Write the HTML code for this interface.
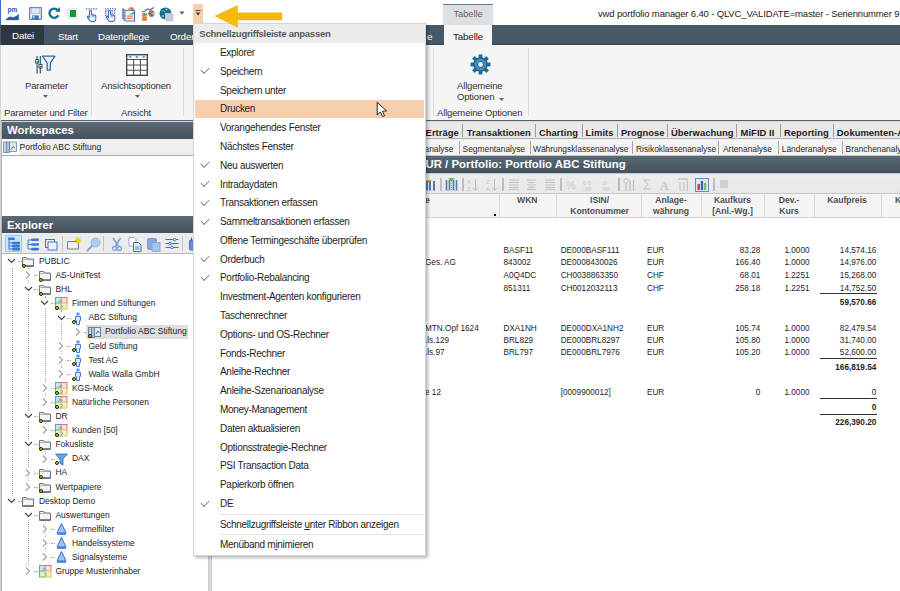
<!DOCTYPE html>
<html><head><meta charset="utf-8"><style>
*{margin:0;padding:0;box-sizing:border-box}
html,body{width:900px;height:591px;overflow:hidden;background:#fff;font-family:"Liberation Sans",sans-serif;color:#222}
.a{position:absolute}
.t{position:absolute;white-space:nowrap;line-height:1}
.hdr{background:linear-gradient(#5a6976,#45525d);color:#fff;font-weight:bold}
.mi{position:absolute;left:26px;font-size:10px;letter-spacing:-0.3px;color:#1e1e1e;white-space:nowrap;line-height:1}
.ck{position:absolute;left:8px;width:8px;height:4.5px;border-left:1.2px solid #808080;border-bottom:1.2px solid #808080;transform:rotate(-45deg)}
.rb{font-size:9.5px;color:#333;letter-spacing:-0.15px}
.tr{font-size:8.6px;color:#1c1c30}
.tb{font-weight:bold;font-size:9.3px;color:#1a1a1a}
.sb{font-size:8.4px;color:#333}
.d{font-size:8.2px;color:#222}
.db{font-size:8.2px;color:#222;font-weight:bold}
.hd{font-size:8.4px;color:#555;font-weight:bold;text-align:center}
</style></head><body>
<div class="a" style="left:0px;top:0px;width:900px;height:25px;background:#fff"></div>
<div class="a" style="left:0px;top:0px;width:1px;height:25px;background:#3c6cc0"></div>
<div class="a" style="left:443px;top:4px;width:50px;height:21px;background:#dde0e3;border-top:1px solid #737b83"></div>
<div class="t rb" style="left:453.5px;top:9px;color:#666">Tabelle</div>
<div class="t rb" style="left:598px;top:9px;color:#222">vwd portfolio manager 6.40 - QLVC_VALIDATE=master - Seriennummer 9</div>
<svg class="a" style="left:5px;top:7px;" width="15" height="14" viewBox="0 0 15 14"><text x="2.5" y="5.3" font-family="Liberation Sans" font-weight="bold" font-size="6.5" fill="#2d5ea8">pm</text><path d="M1 12.5 Q4 8.5 7 10 Q10 11 13.8 6.8 V12.5 Z" fill="#2d5ea8"/><path d="M0.8 12.6h13" stroke="#2d5ea8" stroke-width="1.2"/></svg>
<svg class="a" style="left:29px;top:7px;" width="13" height="13" viewBox="0 0 13 13"><rect x="0.6" y="0.6" width="11.8" height="11.8" rx="0.8" fill="#f0f4fb" stroke="#4a7fd0" stroke-width="1.2"/><rect x="2.5" y="1" width="8" height="5.5" fill="#e2e8f2" stroke="#8aa8d8" stroke-width="0.6"/><rect x="3.2" y="8.4" width="6.6" height="3.6" fill="#3a6cc0"/><rect x="4" y="9.2" width="1.5" height="2" fill="#dfe8f6"/></svg>
<svg class="a" style="left:48px;top:7px;" width="13" height="12" viewBox="0 0 13 12"><path d="M9.6 3.2 A4.6 4.6 0 1 0 10.3 8.2" fill="none" stroke="#1a6e96" stroke-width="2.4"/><path d="M7.2 4.6 L12.2 5 L11.8 0 Z" fill="#1a6e96"/></svg>
<div class="a" style="left:67px;top:8px;width:11px;height:11px;background:#eceef2"></div>
<div class="a" style="left:70px;top:10px;width:6px;height:6.5px;background:#0a9a30"></div>
<svg class="a" style="left:85px;top:6px;" width="14" height="16" viewBox="0 0 14 16"><path d="M1 2.8h11" stroke="#3c6fc8" stroke-width="1.3" stroke-dasharray="1.3 1.1"/><path d="M4.5 12.2 V5.2 a1 1 0 0 1 2 0 V8.5 l3.2 0.6 a1.3 1.3 0 0 1 1.1 1.3 V13 a2.5 2.5 0 0 1 -2.5 2.5 H6.5 a2.5 2.5 0 0 1 -2.2 -1.4 L2.5 11.5 a0.9 0.9 0 0 1 1.5 -1 Z" fill="#fff" stroke="#3c6fc8" stroke-width="1.1"/><path d="M7.2 9 V11.5 M8.9 9.3 V11.5" stroke="#3c6fc8" stroke-width="0.7"/></svg>
<svg class="a" style="left:104px;top:6px;" width="14" height="16" viewBox="0 0 14 16"><path d="M1 2.8h11 M1 5h3 M1 7.2h2 M1 9.4h1.5 M7.5 5h4.5 M7.5 7.2h4.5" stroke="#3c6fc8" stroke-width="1.3" stroke-dasharray="1.3 1.1"/><path d="M4.5 12.2 V5.2 a1 1 0 0 1 2 0 V8.5 l3.2 0.6 a1.3 1.3 0 0 1 1.1 1.3 V13 a2.5 2.5 0 0 1 -2.5 2.5 H6.5 a2.5 2.5 0 0 1 -2.2 -1.4 L2.5 11.5 a0.9 0.9 0 0 1 1.5 -1 Z" fill="#fff" stroke="#3c6fc8" stroke-width="1.1"/><path d="M7.2 9 V11.5 M8.9 9.3 V11.5" stroke="#3c6fc8" stroke-width="0.7"/></svg>
<svg class="a" style="left:122px;top:6px;" width="14" height="16" viewBox="0 0 14 16"><path d="M0.8 2.5 L3.5 4.5 V15 L0.8 13 Z" fill="#9a9a9a" stroke="#3c6fc8" stroke-width="0.9"/><path d="M3.5 4.5 H12.5 V15 H3.5" fill="#fff" stroke="#3c6fc8" stroke-width="1.1"/><path d="M8.5 1 A3.5 3.5 0 0 1 12 4.5 H8.5Z" fill="#f05a1e"/><path d="M8 1.5 A3.5 3.5 0 0 0 5.5 6 L8 4.5 Z" fill="#a8a8a8"/><path d="M6 8.5 L12 5.5 V8.5Z" fill="#3cc878"/><path d="M4.5 10.2h6.5 M4.5 12.3h6.5" stroke="#f07a40" stroke-width="1.2"/></svg>
<svg class="a" style="left:141px;top:6px;" width="15" height="16" viewBox="0 0 15 16"><path d="M1 6 L4 5 L6.5 3 L9 3.8 L13 1.5" fill="none" stroke="#3c6fc8" stroke-width="1.2"/><rect x="1" y="7" width="5" height="8" fill="#f4a070"/><path d="M1.5 9h4 M1.5 11.5h4 M1.5 13.5h4" stroke="#f05a1e" stroke-width="1"/><path d="M2 7.5 L3.5 9 L5.5 7.5Z" fill="#2aa050"/><circle cx="10.5" cy="7.5" r="3.2" fill="#b0b0b0"/><path d="M10.5 7.5 L8 5.5 A3.2 3.2 0 0 1 13 5.5Z" fill="#f05a1e"/><path d="M10.5 7.5 L8 9.5 A3.2 3.2 0 0 0 13 9.5Z" fill="#2aa050"/><path d="M10.5 7.5 L7.5 6 V9Z" fill="#5a5ad0"/></svg>
<svg class="a" style="left:159px;top:6px;" width="15" height="16" viewBox="0 0 15 16"><circle cx="6.5" cy="7.5" r="6" fill="#1f6e90"/><circle cx="4" cy="10" r="0.8" fill="#fff"/><circle cx="7.5" cy="3.5" r="0.8" fill="#fff"/><path d="M3 5 Q5 4 6 6" stroke="#9cc8dc" stroke-width="0.6" fill="none"/><rect x="6.5" y="7.5" width="8" height="8" fill="#a8c0cc" stroke="#ffffff" stroke-width="0.5"/><rect x="7.5" y="8.5" width="6" height="6" fill="#c0d2da"/></svg>
<svg class="a" style="left:179px;top:11px;" width="6" height="4" viewBox="0 0 6 4"><path d="M0.5 0.5h5l-2.5 3z" fill="#555"/></svg>
<div class="a" style="left:193px;top:4px;width:10px;height:19px;background:#f5cfae"></div>
<svg class="a" style="left:195px;top:10px;" width="6" height="7" viewBox="0 0 6 7"><path d="M0.5 0.5h5" stroke="#444" stroke-width="1"/><path d="M0.5 2.5h5l-2.5 3z" fill="#444"/></svg>
<svg class="a" style="left:212px;top:4px;z-index:5" width="72" height="25" viewBox="0 0 72 25"><path d="M2.4 12.1 L25.8 0.9 L25.8 8.4 L70.2 8.4 L70.2 16.2 L25.8 16.2 L25.8 23.8 Z" fill="#f7b80c"/></svg>
<div class="a" style="left:0px;top:25px;width:900px;height:20px;background:#475866;border-bottom:1px solid #3a4852"></div>
<div class="a" style="left:1px;top:25px;width:43px;height:20px;background:#2d3942"></div>
<div class="t rb" style="left:12px;top:30.5px;color:#fff;font-size:9.8px">Datei</div>
<div class="t rb" style="left:58px;top:31.5px;color:#fff;font-size:9.8px">Start</div>
<div class="t rb" style="left:98px;top:31.5px;color:#fff;font-size:9.8px">Datenpflege</div>
<div class="t rb" style="left:170px;top:31.5px;color:#fff;font-size:9.8px">Order</div>
<div class="t rb" style="left:427px;top:31.5px;color:#fff;font-size:9.8px">e</div>
<div class="a" style="left:444px;top:25px;width:48px;height:20px;background:#f5f5f5"></div>
<div class="t rb" style="left:453px;top:31.5px;color:#222;font-size:9.8px">Tabelle</div>
<div class="a" style="left:0px;top:45px;width:900px;height:75px;background:#f5f5f5"></div>
<div class="a" style="left:0px;top:45px;width:1px;height:546px;background:#d4d4d4"></div>
<div class="a" style="left:1px;top:122px;width:1px;height:469px;background:#b0b0b0"></div>
<div class="a" style="left:91px;top:48px;width:1px;height:68px;background:#dcdcdc"></div>
<div class="a" style="left:183px;top:48px;width:1px;height:68px;background:#dcdcdc"></div>
<div class="a" style="left:433px;top:48px;width:1px;height:68px;background:#dcdcdc"></div>
<div class="a" style="left:528px;top:48px;width:1px;height:68px;background:#dcdcdc"></div>
<div class="t rb" style="left:25px;top:81px;">Parameter</div>
<div class="t rb" style="left:4px;top:108px;">Parameter und Filter</div>
<div class="t rb" style="left:101px;top:81px;">Ansichtsoptionen</div>
<div class="t rb" style="left:121px;top:108px;">Ansicht</div>
<div class="t rb" style="left:457px;top:81px;">Allgemeine</div>
<div class="t rb" style="left:457px;top:92px;">Optionen</div>
<div class="t rb" style="left:437px;top:108px;">Allgemeine Optionen</div>
<div class="a" style="left:0px;top:120px;width:900px;height:1px;background:#5a646d"></div>
<div class="a" style="left:0px;top:121px;width:900px;height:1px;background:#d4d8db"></div>
<div class="a" style="left:0px;top:122px;width:208px;height:469px;background:#fff"></div>
<div class="a" style="left:0px;top:45px;width:1px;height:546px;background:#d4d4d4"></div>
<div class="a" style="left:1px;top:122px;width:1px;height:469px;background:#b0b0b0"></div>
<div class="a hdr" style="left:2px;top:122px;width:206px;height:17px"></div>
<div class="t " style="left:7px;top:124.94px;font-size:11.4px;font-weight:bold;color:#fff">Workspaces</div>
<div class="a hdr" style="left:2px;top:216px;width:206px;height:17px"></div>
<div class="t " style="left:7px;top:219.84px;font-size:11.4px;font-weight:bold;color:#fff">Explorer</div>
<div class="a" style="left:2px;top:233px;width:206px;height:21px;background:#ececec;border-bottom:1px solid #b8b8b8"></div>
<div class="a" style="left:5px;top:235px;width:17px;height:17px;background:#cce4f7;border:1px solid #99c9ef"></div>
<div class="a" style="left:208px;top:122px;width:4px;height:469px;background:#d0d1d3"></div>
<div class="a" style="left:210px;top:122px;width:1px;height:469px;background:#dcdddf"></div>
<div class="a" style="left:211px;top:122px;width:1px;height:469px;background:#c7c8ca"></div>
<svg class="a" style="left:35px;top:55px;" width="21" height="19" viewBox="0 0 21 19"><path d="M2.1 1v17.6 M5.4 1v17.6" stroke="#2e6e96" stroke-width="1.3"/><rect x="0.7" y="4.6" width="3" height="3.4" fill="#fff" stroke="#2a3a40" stroke-width="0.9"/><circle cx="2.6" cy="6.6" r="0.9" fill="#2aa040"/><rect x="4" y="9.6" width="3" height="3.4" fill="#fff" stroke="#2a3a40" stroke-width="0.9"/><circle cx="5.6" cy="11.6" r="0.9" fill="#e03030"/><path d="M7.5 1.2 H20 L15.3 8 V15.2 H12.2 V8 Z" fill="#e6eef4" stroke="#2e6e96" stroke-width="1.3" stroke-linejoin="round"/></svg>
<svg class="a" style="left:43px;top:95px;" width="5" height="3" viewBox="0 0 5 3"><path d="M0 0h5l-2.5 3z" fill="#666"/></svg>
<svg class="a" style="left:126px;top:54px;" width="22" height="22" viewBox="0 0 22 22"><rect x="0.7" y="0.7" width="20.6" height="20.6" fill="#fff" stroke="#474747" stroke-width="1.4"/><path d="M0.7 5.5h20.6 M0.7 11h20.6 M0.7 16.3h20.6 M7.6 5.5v15.8 M14.4 5.5v15.8" stroke="#555" stroke-width="1.1"/><path d="M2.5 2.2h3.5l-1.75 2z M9.2 2.2h3.5l-1.75 2z M16 2.2h3.5l-1.75 2z" fill="#2a8ad8"/></svg>
<svg class="a" style="left:135px;top:95px;" width="5" height="3" viewBox="0 0 5 3"><path d="M0 0h5l-2.5 3z" fill="#666"/></svg>
<svg class="a" style="left:470px;top:54px;" width="21" height="21" viewBox="0 0 21 21"><g transform="translate(10.5 10.5)"><rect x="-1.9" y="-10" width="3.8" height="4" transform="rotate(0)" fill="#1b6a98"/><rect x="-1.9" y="-10" width="3.8" height="4" transform="rotate(45)" fill="#1b6a98"/><rect x="-1.9" y="-10" width="3.8" height="4" transform="rotate(90)" fill="#1b6a98"/><rect x="-1.9" y="-10" width="3.8" height="4" transform="rotate(135)" fill="#1b6a98"/><rect x="-1.9" y="-10" width="3.8" height="4" transform="rotate(180)" fill="#1b6a98"/><rect x="-1.9" y="-10" width="3.8" height="4" transform="rotate(225)" fill="#1b6a98"/><rect x="-1.9" y="-10" width="3.8" height="4" transform="rotate(270)" fill="#1b6a98"/><rect x="-1.9" y="-10" width="3.8" height="4" transform="rotate(315)" fill="#1b6a98"/><circle r="7.3" fill="#1b6a98"/><circle r="5.2" fill="none" stroke="#8cb8d4" stroke-width="0.6"/><circle r="3.9" fill="none" stroke="#8cb8d4" stroke-width="0.6"/><circle r="2.4" fill="#f5f5f5"/></g></svg>
<svg class="a" style="left:499px;top:98px;" width="5" height="3" viewBox="0 0 5 3"><path d="M0 0h5l-2.5 3z" fill="#666"/></svg>
<div class="a" style="left:19px;top:139px;width:189px;height:17px;background:#efefef;border-bottom:1px solid #a8a8a8"></div>
<div class="a" style="left:2px;top:139px;width:17px;height:17px;background:#fff;border-bottom:1px solid #a8a8a8"></div>
<svg class="a" style="left:3px;top:141px;" width="14" height="12" viewBox="0 0 14 12"><rect x="0.5" y="1" width="3" height="10.5" fill="#c4d2e4" stroke="#6b86aa" stroke-width="0.8"/><rect x="3.5" y="1" width="3" height="10.5" fill="#aebfd6" stroke="#6b86aa" stroke-width="0.8"/><rect x="6.5" y="1" width="7" height="9.5" fill="#dfe6ef" stroke="#6b86aa" stroke-width="0.8"/><path d="M8 8.5 L10 5.5 L12 7" stroke="#4c6c9c" stroke-width="0.9" fill="none"/></svg>
<div class="t " style="left:19.5px;top:143.20px;font-size:8.5px;color:#1c1c2c">Portfolio ABC Stiftung</div>
<svg class="a" style="left:7px;top:237px;" width="14" height="14" viewBox="0 0 14 14"><rect x="1" y="0.5" width="7" height="2.6" rx="1" fill="#3a78d8"/><path d="M2 3v9.5 M2 6h3 M2 9h3 M2 12h3" stroke="#3a78d8" stroke-width="1"/><rect x="5" y="4.8" width="8" height="2.6" rx="1" fill="#3a78d8"/><rect x="5" y="7.8" width="8" height="2.6" rx="1" fill="#3a78d8"/><rect x="5" y="10.8" width="8" height="2.6" rx="1" fill="#3a78d8"/></svg>
<svg class="a" style="left:26px;top:237px;" width="14" height="14" viewBox="0 0 14 14"><path d="M2 3v9 M2 3h3 M2 7.5h3 M2 12h3" stroke="#3a78d8" stroke-width="1"/><rect x="5" y="1.5" width="8" height="2.6" rx="1" fill="#3a78d8"/><rect x="5" y="6.2" width="8" height="2.6" rx="1" fill="#3a78d8"/><rect x="5" y="10.8" width="8" height="2.6" rx="1" fill="#3a78d8"/></svg>
<svg class="a" style="left:45px;top:239px;" width="13" height="12" viewBox="0 0 13 12"><rect x="0.5" y="0.5" width="9" height="8" fill="none" stroke="#3a78d8"/><rect x="3" y="3" width="9" height="8" fill="#eef2f8" stroke="#3a78d8"/></svg>
<div class="a" style="left:62px;top:236px;width:1px;height:15px;background:#c4c4c4"></div>
<svg class="a" style="left:67px;top:236px;" width="15" height="14" viewBox="0 0 15 14"><path d="M0.5 5.5h11v7.5h-11z" fill="#f0f2f6" stroke="#6a7488" stroke-width="0.9"/><path d="M11 1v7 M7.5 4.5h7 M8.5 2l5 5 M13.5 2l-5 5" stroke="#e8d800" stroke-width="1.2"/></svg>
<svg class="a" style="left:86px;top:237px;" width="15" height="15" viewBox="0 0 15 15"><circle cx="9.5" cy="5.5" r="4.5" fill="#a9cdf2" stroke="#8ab4e6" stroke-width="0.8"/><path d="M6.3 8.8 L1 14" stroke="#8aa0c0" stroke-width="2"/></svg>
<div class="a" style="left:103px;top:236px;width:1px;height:15px;background:#c4c4c4"></div>
<svg class="a" style="left:111px;top:237px;" width="12" height="15" viewBox="0 0 12 15"><path d="M2 1 L7.5 9 M9.5 1 L4.5 9" stroke="#7aa4dc" stroke-width="1.6"/><circle cx="3.5" cy="11.5" r="2" fill="none" stroke="#7aa4dc" stroke-width="1.3"/><circle cx="8.5" cy="11.5" r="2" fill="none" stroke="#7aa4dc" stroke-width="1.3"/></svg>
<svg class="a" style="left:128px;top:237px;" width="14" height="15" viewBox="0 0 14 15"><path d="M1 0.5h5l2 2v6.5h-7z" fill="#fff" stroke="#8a9ab4" stroke-width="0.8"/><path d="M5.5 5.5h5l2.5 2.5v6.5h-7.5z" fill="#e8f0fb" stroke="#3a6cc0" stroke-width="1"/><path d="M7 10h4.5 M7 12h4.5" stroke="#3a6cc0" stroke-width="0.8"/></svg>
<svg class="a" style="left:147px;top:237px;" width="14" height="15" viewBox="0 0 14 15"><rect x="0.5" y="1.5" width="9" height="11" rx="1.5" fill="#8aa8d8" stroke="#7090c8" stroke-width="0.8"/><rect x="5" y="5.5" width="8" height="9" fill="#a8c4ee" stroke="#7aa0dc" stroke-width="0.8"/></svg>
<svg class="a" style="left:165px;top:238px;" width="14" height="11" viewBox="0 0 14 11"><path d="M0.5 1.5h13 M0.5 5.5h13 M0.5 9.5h13" stroke="#3a6cc8" stroke-width="1"/><circle cx="9.5" cy="1.5" r="1.3" fill="#fff" stroke="#3a6cc8"/><circle cx="5" cy="5.5" r="1.3" fill="#fff" stroke="#3a6cc8"/><circle cx="7" cy="9.5" r="1.3" fill="#fff" stroke="#3a6cc8"/></svg>
<div class="a" style="left:182px;top:236px;width:1px;height:15px;background:#c4c4c4"></div>
<svg class="a" style="left:189px;top:237px;" width="5" height="14" viewBox="0 0 5 14"><rect x="0.5" y="3" width="4" height="10" rx="1" fill="#6a8ed8" stroke="#3a5ca8" stroke-width="0.8"/><path d="M2.5 3V0.5" stroke="#3a5ca8"/></svg>
<div class="a" style="left:17.5px;top:261.1px;width:4px;height:0;border-top:1px dotted #a8a8a8"></div>
<div class="a" style="left:28.2px;top:268.1px;width:0;height:216.6px;border-left:1px dotted #a8a8a8"></div>
<div class="a" style="left:34.0px;top:275.2px;width:4px;height:0;border-top:1px dotted #a8a8a8"></div>
<div class="a" style="left:34.0px;top:289.3px;width:4px;height:0;border-top:1px dotted #a8a8a8"></div>
<div class="a" style="left:44.7px;top:296.3px;width:0;height:103.8px;border-left:1px dotted #a8a8a8"></div>
<div class="a" style="left:50.5px;top:303.4px;width:4px;height:0;border-top:1px dotted #a8a8a8"></div>
<div class="a" style="left:61.2px;top:310.4px;width:0;height:61.5px;border-left:1px dotted #a8a8a8"></div>
<div class="a" style="left:67.0px;top:317.5px;width:4px;height:0;border-top:1px dotted #a8a8a8"></div>
<div class="a" style="left:77.7px;top:324.5px;width:0;height:5.1px;border-left:1px dotted #a8a8a8"></div>
<div class="a" style="left:83.5px;top:331.6px;width:4px;height:0;border-top:1px dotted #a8a8a8"></div>
<div class="a" style="left:67.0px;top:345.7px;width:4px;height:0;border-top:1px dotted #a8a8a8"></div>
<div class="a" style="left:67.0px;top:359.8px;width:4px;height:0;border-top:1px dotted #a8a8a8"></div>
<div class="a" style="left:67.0px;top:373.9px;width:4px;height:0;border-top:1px dotted #a8a8a8"></div>
<div class="a" style="left:50.5px;top:388.0px;width:4px;height:0;border-top:1px dotted #a8a8a8"></div>
<div class="a" style="left:50.5px;top:402.1px;width:4px;height:0;border-top:1px dotted #a8a8a8"></div>
<div class="a" style="left:34.0px;top:416.2px;width:4px;height:0;border-top:1px dotted #a8a8a8"></div>
<div class="a" style="left:44.7px;top:423.2px;width:0;height:5.1px;border-left:1px dotted #a8a8a8"></div>
<div class="a" style="left:50.5px;top:430.3px;width:4px;height:0;border-top:1px dotted #a8a8a8"></div>
<div class="a" style="left:34.0px;top:444.4px;width:4px;height:0;border-top:1px dotted #a8a8a8"></div>
<div class="a" style="left:44.7px;top:451.4px;width:0;height:5.1px;border-left:1px dotted #a8a8a8"></div>
<div class="a" style="left:50.5px;top:458.5px;width:4px;height:0;border-top:1px dotted #a8a8a8"></div>
<div class="a" style="left:34.0px;top:472.6px;width:4px;height:0;border-top:1px dotted #a8a8a8"></div>
<div class="a" style="left:34.0px;top:486.7px;width:4px;height:0;border-top:1px dotted #a8a8a8"></div>
<div class="a" style="left:17.5px;top:500.8px;width:4px;height:0;border-top:1px dotted #a8a8a8"></div>
<div class="a" style="left:28.2px;top:507.8px;width:0;height:61.5px;border-left:1px dotted #a8a8a8"></div>
<div class="a" style="left:34.0px;top:514.9px;width:4px;height:0;border-top:1px dotted #a8a8a8"></div>
<div class="a" style="left:44.7px;top:521.9px;width:0;height:33.3px;border-left:1px dotted #a8a8a8"></div>
<div class="a" style="left:50.5px;top:529.0px;width:4px;height:0;border-top:1px dotted #a8a8a8"></div>
<div class="a" style="left:50.5px;top:543.1px;width:4px;height:0;border-top:1px dotted #a8a8a8"></div>
<div class="a" style="left:50.5px;top:557.2px;width:4px;height:0;border-top:1px dotted #a8a8a8"></div>
<div class="a" style="left:34.0px;top:571.3px;width:4px;height:0;border-top:1px dotted #a8a8a8"></div>
<div class="a" style="left:11.7px;top:268.1px;width:0;height:227.7px;border-left:1px dotted #a8a8a8"></div>
<div class="a" style="left:86px;top:324.6px;width:102px;height:14px;background:#dedede"></div>
<svg class="a" style="left:7.1px;top:256.1px" width="9" height="10" viewBox="0 0 9 10"><rect width="9" height="10" fill="#fff"/><path d="M1 3l3.5 3.5 3.5-3.5" fill="none" stroke="#454545" stroke-width="1.2"/></svg>
<svg class="a" style="left:22.1px;top:255.1px" width="13" height="13" viewBox="0 0 13 13"><path d="M0.5 2.5h4l1 1.5h6v7.5h-11z" fill="#f4f4f6" stroke="#6c7380" stroke-width="1"/><path d="M0.5 4.5h11" stroke="#9aa0aa" stroke-width="0.8"/><path d="M1 10.6h10.5" stroke="#7c8390" stroke-width="1.2"/></svg>
<div class="a" style="left:22.4px;top:263.7px;width:4px;height:4px;border-radius:50%;background:#e0d020;border:1px solid #202000"></div>
<div class="t" style="left:38.9px;top:256.9px;font-size:8.5px;color:#1c1c2c">PUBLIC</div>
<svg class="a" style="left:24.1px;top:270.2px" width="8" height="10" viewBox="0 0 8 10"><rect width="8" height="10" fill="#fff"/><path d="M2 1.5l3.5 3.5-3.5 3.5" fill="none" stroke="#a0a0a0" stroke-width="1.1"/></svg>
<svg class="a" style="left:38.6px;top:269.2px" width="13" height="13" viewBox="0 0 13 13"><path d="M0.5 2.5h4l1 1.5h6v7.5h-11z" fill="#f4f4f6" stroke="#6c7380" stroke-width="1"/><path d="M0.5 4.5h11" stroke="#9aa0aa" stroke-width="0.8"/><path d="M1 10.6h10.5" stroke="#7c8390" stroke-width="1.2"/></svg>
<div class="a" style="left:38.9px;top:277.8px;width:4px;height:4px;border-radius:50%;background:#e0d020;border:1px solid #202000"></div>
<div class="t" style="left:55.4px;top:271.0px;font-size:8.5px;color:#1c1c2c">AS-UnitTest</div>
<svg class="a" style="left:23.6px;top:284.3px" width="9" height="10" viewBox="0 0 9 10"><rect width="9" height="10" fill="#fff"/><path d="M1 3l3.5 3.5 3.5-3.5" fill="none" stroke="#454545" stroke-width="1.2"/></svg>
<svg class="a" style="left:38.6px;top:283.3px" width="13" height="13" viewBox="0 0 13 13"><path d="M0.5 2.5h4l1 1.5h6v7.5h-11z" fill="#f4f4f6" stroke="#6c7380" stroke-width="1"/><path d="M0.5 4.5h11" stroke="#9aa0aa" stroke-width="0.8"/><path d="M1 10.6h10.5" stroke="#7c8390" stroke-width="1.2"/></svg>
<div class="a" style="left:38.9px;top:291.9px;width:4px;height:4px;border-radius:50%;background:#e0d020;border:1px solid #202000"></div>
<div class="t" style="left:55.4px;top:285.1px;font-size:8.5px;color:#1c1c2c">BHL</div>
<svg class="a" style="left:40.1px;top:298.4px" width="9" height="10" viewBox="0 0 9 10"><rect width="9" height="10" fill="#fff"/><path d="M1 3l3.5 3.5 3.5-3.5" fill="none" stroke="#454545" stroke-width="1.2"/></svg>
<svg class="a" style="left:55.1px;top:297.4px" width="13" height="13" viewBox="0 0 13 13"><rect x="0.5" y="0.5" width="6" height="6" fill="#cfe2f8" stroke="#5a94dc" stroke-width="0.9"/><rect x="6" y="0.5" width="6" height="6" fill="#fbe0e0" stroke="#dc6a6a" stroke-width="0.9"/><rect x="0.5" y="6" width="6" height="6" fill="#dcf2cc" stroke="#5ab84a" stroke-width="0.9"/><rect x="6" y="6" width="6" height="6" fill="#faf0c0" stroke="#d8c050" stroke-width="0.9"/><path d="M4 5 a1.5 1.5 0 0 1 3 0 M6 8 a1.5 1.5 0 0 1 0 3" stroke="#5a94dc" fill="none" stroke-width="0.8"/></svg>
<div class="a" style="left:55.4px;top:306.0px;width:4px;height:4px;border-radius:50%;background:#e0d020;border:1px solid #202000"></div>
<div class="t" style="left:71.9px;top:299.2px;font-size:8.5px;color:#1c1c2c">Firmen und Stiftungen</div>
<svg class="a" style="left:56.6px;top:312.5px" width="9" height="10" viewBox="0 0 9 10"><rect width="9" height="10" fill="#fff"/><path d="M1 3l3.5 3.5 3.5-3.5" fill="none" stroke="#454545" stroke-width="1.2"/></svg>
<svg class="a" style="left:71.6px;top:311.5px" width="13" height="13" viewBox="0 0 13 13"><circle cx="6" cy="2" r="1.8" fill="#5b9be8"/><path d="M3.5 4.5h5v4h-1v4h-3v-4h-1z" fill="#dbe9fb" stroke="#3c7fe0" stroke-width="1"/></svg>
<div class="a" style="left:71.9px;top:320.1px;width:4px;height:4px;border-radius:50%;background:#e0d020;border:1px solid #202000"></div>
<div class="t" style="left:88.4px;top:313.3px;font-size:8.5px;color:#1c1c2c">ABC Stiftung</div>
<svg class="a" style="left:73.6px;top:326.6px" width="8" height="10" viewBox="0 0 8 10"><rect width="8" height="10" fill="#fff"/><path d="M2 1.5l3.5 3.5-3.5 3.5" fill="none" stroke="#a0a0a0" stroke-width="1.1"/></svg>
<svg class="a" style="left:88.1px;top:325.6px" width="13" height="13" viewBox="0 0 13 13"><rect x="0.5" y="1.5" width="3" height="10" fill="#c8d4e4" stroke="#6b7f9c"/><rect x="3.5" y="1.5" width="3" height="10" fill="#b4c4d8" stroke="#6b7f9c"/><rect x="6.5" y="1.5" width="6" height="9" fill="#e4eaf2" stroke="#6b7f9c"/><path d="M8 8l2-3 1.5 2" stroke="#4a6a9c" fill="none"/></svg>
<div class="a" style="left:88.4px;top:334.2px;width:4px;height:4px;border-radius:50%;background:#e0d020;border:1px solid #202000"></div>
<div class="t" style="left:104.9px;top:327.4px;font-size:8.5px;color:#1c1c2c">Portfolio ABC Stiftung</div>
<svg class="a" style="left:57.1px;top:340.7px" width="8" height="10" viewBox="0 0 8 10"><rect width="8" height="10" fill="#fff"/><path d="M2 1.5l3.5 3.5-3.5 3.5" fill="none" stroke="#a0a0a0" stroke-width="1.1"/></svg>
<svg class="a" style="left:71.6px;top:339.7px" width="13" height="13" viewBox="0 0 13 13"><circle cx="6" cy="2" r="1.8" fill="#5b9be8"/><path d="M3.5 4.5h5v4h-1v4h-3v-4h-1z" fill="#dbe9fb" stroke="#3c7fe0" stroke-width="1"/></svg>
<div class="a" style="left:71.9px;top:348.3px;width:4px;height:4px;border-radius:50%;background:#e0d020;border:1px solid #202000"></div>
<div class="t" style="left:88.4px;top:341.5px;font-size:8.5px;color:#1c1c2c">Geld Stiftung</div>
<svg class="a" style="left:57.1px;top:354.8px" width="8" height="10" viewBox="0 0 8 10"><rect width="8" height="10" fill="#fff"/><path d="M2 1.5l3.5 3.5-3.5 3.5" fill="none" stroke="#a0a0a0" stroke-width="1.1"/></svg>
<svg class="a" style="left:71.6px;top:353.8px" width="13" height="13" viewBox="0 0 13 13"><circle cx="6" cy="2" r="1.8" fill="#5b9be8"/><path d="M3.5 4.5h5v4h-1v4h-3v-4h-1z" fill="#dbe9fb" stroke="#3c7fe0" stroke-width="1"/></svg>
<div class="a" style="left:71.9px;top:362.4px;width:4px;height:4px;border-radius:50%;background:#e0d020;border:1px solid #202000"></div>
<div class="t" style="left:88.4px;top:355.6px;font-size:8.5px;color:#1c1c2c">Test AG</div>
<svg class="a" style="left:57.1px;top:368.9px" width="8" height="10" viewBox="0 0 8 10"><rect width="8" height="10" fill="#fff"/><path d="M2 1.5l3.5 3.5-3.5 3.5" fill="none" stroke="#a0a0a0" stroke-width="1.1"/></svg>
<svg class="a" style="left:71.6px;top:367.9px" width="13" height="13" viewBox="0 0 13 13"><circle cx="6" cy="2" r="1.8" fill="#5b9be8"/><path d="M3.5 4.5h5v4h-1v4h-3v-4h-1z" fill="#dbe9fb" stroke="#3c7fe0" stroke-width="1"/></svg>
<div class="a" style="left:71.9px;top:376.5px;width:4px;height:4px;border-radius:50%;background:#e0d020;border:1px solid #202000"></div>
<div class="t" style="left:88.4px;top:369.7px;font-size:8.5px;color:#1c1c2c">Walla Walla GmbH</div>
<svg class="a" style="left:40.6px;top:383.0px" width="8" height="10" viewBox="0 0 8 10"><rect width="8" height="10" fill="#fff"/><path d="M2 1.5l3.5 3.5-3.5 3.5" fill="none" stroke="#a0a0a0" stroke-width="1.1"/></svg>
<svg class="a" style="left:55.1px;top:382.0px" width="13" height="13" viewBox="0 0 13 13"><rect x="0.5" y="0.5" width="6" height="6" fill="#cfe2f8" stroke="#5a94dc" stroke-width="0.9"/><rect x="6" y="0.5" width="6" height="6" fill="#fbe0e0" stroke="#dc6a6a" stroke-width="0.9"/><rect x="0.5" y="6" width="6" height="6" fill="#dcf2cc" stroke="#5ab84a" stroke-width="0.9"/><rect x="6" y="6" width="6" height="6" fill="#faf0c0" stroke="#d8c050" stroke-width="0.9"/><path d="M4 5 a1.5 1.5 0 0 1 3 0 M6 8 a1.5 1.5 0 0 1 0 3" stroke="#5a94dc" fill="none" stroke-width="0.8"/></svg>
<div class="a" style="left:55.4px;top:390.6px;width:4px;height:4px;border-radius:50%;background:#e0d020;border:1px solid #202000"></div>
<div class="t" style="left:71.9px;top:383.8px;font-size:8.5px;color:#1c1c2c">KGS-Mock</div>
<svg class="a" style="left:40.6px;top:397.1px" width="8" height="10" viewBox="0 0 8 10"><rect width="8" height="10" fill="#fff"/><path d="M2 1.5l3.5 3.5-3.5 3.5" fill="none" stroke="#a0a0a0" stroke-width="1.1"/></svg>
<svg class="a" style="left:55.1px;top:396.1px" width="13" height="13" viewBox="0 0 13 13"><rect x="0.5" y="0.5" width="6" height="6" fill="#cfe2f8" stroke="#5a94dc" stroke-width="0.9"/><rect x="6" y="0.5" width="6" height="6" fill="#fbe0e0" stroke="#dc6a6a" stroke-width="0.9"/><rect x="0.5" y="6" width="6" height="6" fill="#dcf2cc" stroke="#5ab84a" stroke-width="0.9"/><rect x="6" y="6" width="6" height="6" fill="#faf0c0" stroke="#d8c050" stroke-width="0.9"/><path d="M4 5 a1.5 1.5 0 0 1 3 0 M6 8 a1.5 1.5 0 0 1 0 3" stroke="#5a94dc" fill="none" stroke-width="0.8"/></svg>
<div class="a" style="left:55.4px;top:404.7px;width:4px;height:4px;border-radius:50%;background:#e0d020;border:1px solid #202000"></div>
<div class="t" style="left:71.9px;top:397.9px;font-size:8.5px;color:#1c1c2c">Natürliche Personen</div>
<svg class="a" style="left:23.6px;top:411.2px" width="9" height="10" viewBox="0 0 9 10"><rect width="9" height="10" fill="#fff"/><path d="M1 3l3.5 3.5 3.5-3.5" fill="none" stroke="#454545" stroke-width="1.2"/></svg>
<svg class="a" style="left:38.6px;top:410.2px" width="13" height="13" viewBox="0 0 13 13"><path d="M0.5 2.5h4l1 1.5h6v7.5h-11z" fill="#f4f4f6" stroke="#6c7380" stroke-width="1"/><path d="M0.5 4.5h11" stroke="#9aa0aa" stroke-width="0.8"/><path d="M1 10.6h10.5" stroke="#7c8390" stroke-width="1.2"/></svg>
<div class="a" style="left:38.9px;top:418.8px;width:4px;height:4px;border-radius:50%;background:#e0d020;border:1px solid #202000"></div>
<div class="t" style="left:55.4px;top:412.0px;font-size:8.5px;color:#1c1c2c">DR</div>
<svg class="a" style="left:40.6px;top:425.3px" width="8" height="10" viewBox="0 0 8 10"><rect width="8" height="10" fill="#fff"/><path d="M2 1.5l3.5 3.5-3.5 3.5" fill="none" stroke="#a0a0a0" stroke-width="1.1"/></svg>
<svg class="a" style="left:55.1px;top:424.3px" width="13" height="13" viewBox="0 0 13 13"><rect x="0.5" y="0.5" width="6" height="6" fill="#cfe2f8" stroke="#5a94dc" stroke-width="0.9"/><rect x="6" y="0.5" width="6" height="6" fill="#fbe0e0" stroke="#dc6a6a" stroke-width="0.9"/><rect x="0.5" y="6" width="6" height="6" fill="#dcf2cc" stroke="#5ab84a" stroke-width="0.9"/><rect x="6" y="6" width="6" height="6" fill="#faf0c0" stroke="#d8c050" stroke-width="0.9"/><path d="M4 5 a1.5 1.5 0 0 1 3 0 M6 8 a1.5 1.5 0 0 1 0 3" stroke="#5a94dc" fill="none" stroke-width="0.8"/></svg>
<div class="a" style="left:55.4px;top:432.9px;width:4px;height:4px;border-radius:50%;background:#e0d020;border:1px solid #202000"></div>
<div class="t" style="left:71.9px;top:426.1px;font-size:8.5px;color:#1c1c2c">Kunden [50]</div>
<svg class="a" style="left:23.6px;top:439.4px" width="9" height="10" viewBox="0 0 9 10"><rect width="9" height="10" fill="#fff"/><path d="M1 3l3.5 3.5 3.5-3.5" fill="none" stroke="#454545" stroke-width="1.2"/></svg>
<svg class="a" style="left:38.6px;top:438.4px" width="13" height="13" viewBox="0 0 13 13"><path d="M0.5 2.5h4l1 1.5h6v7.5h-11z" fill="#f4f4f6" stroke="#6c7380" stroke-width="1"/><path d="M0.5 4.5h11" stroke="#9aa0aa" stroke-width="0.8"/><path d="M1 10.6h10.5" stroke="#7c8390" stroke-width="1.2"/></svg>
<div class="a" style="left:38.9px;top:447.0px;width:4px;height:4px;border-radius:50%;background:#e0d020;border:1px solid #202000"></div>
<div class="t" style="left:55.4px;top:440.2px;font-size:8.5px;color:#1c1c2c">Fokusliste</div>
<svg class="a" style="left:40.6px;top:453.5px" width="8" height="10" viewBox="0 0 8 10"><rect width="8" height="10" fill="#fff"/><path d="M2 1.5l3.5 3.5-3.5 3.5" fill="none" stroke="#a0a0a0" stroke-width="1.1"/></svg>
<svg class="a" style="left:55.1px;top:452.5px" width="13" height="13" viewBox="0 0 13 13"><path d="M0.5 1h12l-4.5 5v6l-3-1.5v-4.5z" fill="#5ea8e8" stroke="#2a6fc0" stroke-width="0.8"/></svg>
<div class="a" style="left:55.4px;top:461.1px;width:4px;height:4px;border-radius:50%;background:#e0d020;border:1px solid #202000"></div>
<div class="t" style="left:71.9px;top:454.3px;font-size:8.5px;color:#1c1c2c">DAX</div>
<svg class="a" style="left:24.1px;top:467.6px" width="8" height="10" viewBox="0 0 8 10"><rect width="8" height="10" fill="#fff"/><path d="M2 1.5l3.5 3.5-3.5 3.5" fill="none" stroke="#a0a0a0" stroke-width="1.1"/></svg>
<svg class="a" style="left:38.6px;top:466.6px" width="13" height="13" viewBox="0 0 13 13"><path d="M0.5 2.5h4l1 1.5h6v7.5h-11z" fill="#f4f4f6" stroke="#6c7380" stroke-width="1"/><path d="M0.5 4.5h11" stroke="#9aa0aa" stroke-width="0.8"/><path d="M1 10.6h10.5" stroke="#7c8390" stroke-width="1.2"/></svg>
<div class="a" style="left:38.9px;top:475.2px;width:4px;height:4px;border-radius:50%;background:#e0d020;border:1px solid #202000"></div>
<div class="t" style="left:55.4px;top:468.4px;font-size:8.5px;color:#1c1c2c">HA</div>
<svg class="a" style="left:24.1px;top:481.7px" width="8" height="10" viewBox="0 0 8 10"><rect width="8" height="10" fill="#fff"/><path d="M2 1.5l3.5 3.5-3.5 3.5" fill="none" stroke="#a0a0a0" stroke-width="1.1"/></svg>
<svg class="a" style="left:38.6px;top:480.7px" width="13" height="13" viewBox="0 0 13 13"><path d="M0.5 2.5h4l1 1.5h6v7.5h-11z" fill="#f4f4f6" stroke="#6c7380" stroke-width="1"/><path d="M0.5 4.5h11" stroke="#9aa0aa" stroke-width="0.8"/><path d="M1 10.6h10.5" stroke="#7c8390" stroke-width="1.2"/></svg>
<div class="a" style="left:38.9px;top:489.3px;width:4px;height:4px;border-radius:50%;background:#e0d020;border:1px solid #202000"></div>
<div class="t" style="left:55.4px;top:482.5px;font-size:8.5px;color:#1c1c2c">Wertpapiere</div>
<svg class="a" style="left:7.1px;top:495.8px" width="9" height="10" viewBox="0 0 9 10"><rect width="9" height="10" fill="#fff"/><path d="M1 3l3.5 3.5 3.5-3.5" fill="none" stroke="#454545" stroke-width="1.2"/></svg>
<svg class="a" style="left:22.1px;top:494.8px" width="13" height="13" viewBox="0 0 13 13"><path d="M0.5 2.5h4l1 1.5h6v7.5h-11z" fill="#f4f4f6" stroke="#6c7380" stroke-width="1"/><path d="M0.5 4.5h11" stroke="#9aa0aa" stroke-width="0.8"/><path d="M1 10.6h10.5" stroke="#7c8390" stroke-width="1.2"/></svg>
<div class="t" style="left:38.9px;top:496.6px;font-size:8.5px;color:#1c1c2c">Desktop Demo</div>
<svg class="a" style="left:23.6px;top:509.9px" width="9" height="10" viewBox="0 0 9 10"><rect width="9" height="10" fill="#fff"/><path d="M1 3l3.5 3.5 3.5-3.5" fill="none" stroke="#454545" stroke-width="1.2"/></svg>
<svg class="a" style="left:38.6px;top:508.9px" width="13" height="13" viewBox="0 0 13 13"><path d="M0.5 2.5h4l1 1.5h6v7.5h-11z" fill="#f4f4f6" stroke="#6c7380" stroke-width="1"/><path d="M0.5 4.5h11" stroke="#9aa0aa" stroke-width="0.8"/><path d="M1 10.6h10.5" stroke="#7c8390" stroke-width="1.2"/></svg>
<div class="t" style="left:55.4px;top:510.7px;font-size:8.5px;color:#1c1c2c">Auswertungen</div>
<svg class="a" style="left:40.6px;top:524.0px" width="8" height="10" viewBox="0 0 8 10"><rect width="8" height="10" fill="#fff"/><path d="M2 1.5l3.5 3.5-3.5 3.5" fill="none" stroke="#a0a0a0" stroke-width="1.1"/></svg>
<svg class="a" style="left:55.1px;top:523.0px" width="13" height="13" viewBox="0 0 13 13"><path d="M6.5 0.5l4.5 9.5h-9z" fill="#9cc4f4" stroke="#2f6ed0" stroke-width="1"/><path d="M2 11h9" stroke="#2f6ed0" stroke-width="1.5"/></svg>
<div class="t" style="left:71.9px;top:524.8px;font-size:8.5px;color:#1c1c2c">Formelfilter</div>
<svg class="a" style="left:40.6px;top:538.1px" width="8" height="10" viewBox="0 0 8 10"><rect width="8" height="10" fill="#fff"/><path d="M2 1.5l3.5 3.5-3.5 3.5" fill="none" stroke="#a0a0a0" stroke-width="1.1"/></svg>
<svg class="a" style="left:55.1px;top:537.1px" width="13" height="13" viewBox="0 0 13 13"><path d="M6.5 0.5l4.5 9.5h-9z" fill="#9cc4f4" stroke="#2f6ed0" stroke-width="1"/><path d="M2 11h9" stroke="#2f6ed0" stroke-width="1.5"/></svg>
<div class="t" style="left:71.9px;top:538.9px;font-size:8.5px;color:#1c1c2c">Handelssysteme</div>
<svg class="a" style="left:40.6px;top:552.2px" width="8" height="10" viewBox="0 0 8 10"><rect width="8" height="10" fill="#fff"/><path d="M2 1.5l3.5 3.5-3.5 3.5" fill="none" stroke="#a0a0a0" stroke-width="1.1"/></svg>
<svg class="a" style="left:55.1px;top:551.2px" width="13" height="13" viewBox="0 0 13 13"><path d="M6.5 0.5l4.5 9.5h-9z" fill="#9cc4f4" stroke="#2f6ed0" stroke-width="1"/><path d="M2 11h9" stroke="#2f6ed0" stroke-width="1.5"/></svg>
<div class="t" style="left:71.9px;top:553.0px;font-size:8.5px;color:#1c1c2c">Signalsysteme</div>
<svg class="a" style="left:24.1px;top:566.3px" width="8" height="10" viewBox="0 0 8 10"><rect width="8" height="10" fill="#fff"/><path d="M2 1.5l3.5 3.5-3.5 3.5" fill="none" stroke="#a0a0a0" stroke-width="1.1"/></svg>
<svg class="a" style="left:38.6px;top:565.3px" width="13" height="13" viewBox="0 0 13 13"><rect x="0.5" y="0.5" width="6" height="6" fill="#cfe2f8" stroke="#5a94dc" stroke-width="0.9"/><rect x="6" y="0.5" width="6" height="6" fill="#fbe0e0" stroke="#dc6a6a" stroke-width="0.9"/><rect x="0.5" y="6" width="6" height="6" fill="#dcf2cc" stroke="#5ab84a" stroke-width="0.9"/><rect x="6" y="6" width="6" height="6" fill="#faf0c0" stroke="#d8c050" stroke-width="0.9"/><path d="M4 5 a1.5 1.5 0 0 1 3 0 M6 8 a1.5 1.5 0 0 1 0 3" stroke="#5a94dc" fill="none" stroke-width="0.8"/></svg>
<div class="t" style="left:55.4px;top:567.1px;font-size:8.5px;color:#1c1c2c">Gruppe Musterinhaber</div>
<div class="a" style="left:212px;top:122px;width:688px;height:469px;background:#fff"></div>
<div class="a" style="left:212px;top:122px;width:688px;height:17px;background:#e9e9e9;border-bottom:1px solid #b0b0b0"></div>
<div class="a" style="left:212px;top:139px;width:688px;height:17px;background:#f3f3f3;border-bottom:1px solid #c4c4c4"></div>
<div class="t " style="left:425.6px;top:127.64px;font-size:9.4px;font-weight:bold;color:#1a1a1a;letter-spacing:0.05px">Erträge</div>
<div class="t " style="left:466.7px;top:127.64px;font-size:9.4px;font-weight:bold;color:#1a1a1a;letter-spacing:0.05px">Transaktionen</div>
<div class="t " style="left:539px;top:127.64px;font-size:9.4px;font-weight:bold;color:#1a1a1a;letter-spacing:0.05px">Charting</div>
<div class="t " style="left:585.6px;top:127.64px;font-size:9.4px;font-weight:bold;color:#1a1a1a;letter-spacing:0.05px">Limits</div>
<div class="t " style="left:621px;top:127.64px;font-size:9.4px;font-weight:bold;color:#1a1a1a;letter-spacing:0.05px">Prognose</div>
<div class="t " style="left:671px;top:127.64px;font-size:9.4px;font-weight:bold;color:#1a1a1a;letter-spacing:0.05px">Überwachung</div>
<div class="t " style="left:740.6px;top:127.64px;font-size:9.4px;font-weight:bold;color:#1a1a1a;letter-spacing:0.05px">MiFID II</div>
<div class="t " style="left:784px;top:127.64px;font-size:9.4px;font-weight:bold;color:#1a1a1a;letter-spacing:0.05px">Reporting</div>
<div class="t " style="left:836.8px;top:127.64px;font-size:9.4px;font-weight:bold;color:#1a1a1a;letter-spacing:0.05px">Dokumenten-Archiv</div>
<div class="a" style="left:462px;top:124px;width:1px;height:13px;background:#9a9a9a"></div>
<div class="a" style="left:535px;top:124px;width:1px;height:13px;background:#9a9a9a"></div>
<div class="a" style="left:582px;top:124px;width:1px;height:13px;background:#9a9a9a"></div>
<div class="a" style="left:617px;top:124px;width:1px;height:13px;background:#9a9a9a"></div>
<div class="a" style="left:667px;top:124px;width:1px;height:13px;background:#9a9a9a"></div>
<div class="a" style="left:736px;top:124px;width:1px;height:13px;background:#9a9a9a"></div>
<div class="a" style="left:780px;top:124px;width:1px;height:13px;background:#9a9a9a"></div>
<div class="a" style="left:833px;top:124px;width:1px;height:13px;background:#9a9a9a"></div>
<div class="t " style="left:424.5px;top:145.09px;font-size:8.4px;color:#2a2a2a">analyse</div>
<div class="t " style="left:462.6px;top:145.09px;font-size:8.4px;color:#2a2a2a">Segmentanalyse</div>
<div class="t " style="left:533px;top:145.09px;font-size:8.4px;color:#2a2a2a">Währungsklassenanalyse</div>
<div class="t " style="left:636px;top:145.09px;font-size:8.4px;color:#2a2a2a">Risikoklassenanalyse</div>
<div class="t " style="left:723px;top:145.09px;font-size:8.4px;color:#2a2a2a">Artenanalyse</div>
<div class="t " style="left:781.8px;top:145.09px;font-size:8.4px;color:#2a2a2a">Länderanalyse</div>
<div class="t " style="left:845.6px;top:145.09px;font-size:8.4px;color:#2a2a2a">Branchenanalyse</div>
<div class="a" style="left:459px;top:141px;width:1px;height:13px;background:#a8a8a8"></div>
<div class="a" style="left:530px;top:141px;width:1px;height:13px;background:#a8a8a8"></div>
<div class="a" style="left:632px;top:141px;width:1px;height:13px;background:#a8a8a8"></div>
<div class="a" style="left:718px;top:141px;width:1px;height:13px;background:#a8a8a8"></div>
<div class="a" style="left:778px;top:141px;width:1px;height:13px;background:#a8a8a8"></div>
<div class="a" style="left:842px;top:141px;width:1px;height:13px;background:#a8a8a8"></div>
<div class="a hdr" style="left:212px;top:156px;width:688px;height:17px"></div>
<div class="t " style="left:425.5px;top:158.54px;font-size:11.4px;font-weight:bold;color:#fff">UR / Portfolio: Portfolio ABC Stiftung</div>
<div class="a" style="left:212px;top:173px;width:688px;height:21px;background:linear-gradient(#eceded,#e7e8e9);border-top:1px solid #c4c9cd;border-bottom:1px solid #c8c8c8"></div>
<div class="a" style="left:212px;top:194px;width:688px;height:24px;background:#f4f4f4;border-bottom:1px solid #d4d4d4"></div>
<div class="a" style="left:499px;top:195px;width:1px;height:22px;background:#d8d8d8"></div>
<div class="a" style="left:556px;top:195px;width:1px;height:22px;background:#d8d8d8"></div>
<div class="a" style="left:641px;top:195px;width:1px;height:22px;background:#d8d8d8"></div>
<div class="a" style="left:701px;top:195px;width:1px;height:22px;background:#d8d8d8"></div>
<div class="a" style="left:764px;top:195px;width:1px;height:22px;background:#d8d8d8"></div>
<div class="a" style="left:814px;top:195px;width:1px;height:22px;background:#d8d8d8"></div>
<div class="a" style="left:881px;top:195px;width:1px;height:22px;background:#d8d8d8"></div>
<div class="t " style="left:425px;top:195.92px;font-size:8.6px;font-weight:bold;color:#505050">e</div>
<div class="t" style="left:487.29999999999995px;width:80px;text-align:center;top:195.92px;font-size:8.6px;font-weight:bold;color:#505050">WKN</div>
<div class="t" style="left:559.6px;width:80px;text-align:center;top:195.92px;font-size:8.6px;font-weight:bold;color:#505050">ISIN/</div>
<div class="t" style="left:559.6px;width:80px;text-align:center;top:206.52px;font-size:8.6px;font-weight:bold;color:#505050">Kontonummer</div>
<div class="t" style="left:631px;width:80px;text-align:center;top:195.92px;font-size:8.6px;font-weight:bold;color:#505050">Anlage-</div>
<div class="t" style="left:631px;width:80px;text-align:center;top:206.52px;font-size:8.6px;font-weight:bold;color:#505050">währung</div>
<div class="t" style="left:692.5px;width:80px;text-align:center;top:195.92px;font-size:8.6px;font-weight:bold;color:#505050">Kaufkurs</div>
<div class="t" style="left:692.5px;width:80px;text-align:center;top:206.52px;font-size:8.6px;font-weight:bold;color:#505050">[Anl.-Wg.]</div>
<div class="t" style="left:749px;width:80px;text-align:center;top:195.92px;font-size:8.6px;font-weight:bold;color:#505050">Dev.-</div>
<div class="t" style="left:749px;width:80px;text-align:center;top:206.52px;font-size:8.6px;font-weight:bold;color:#505050">Kurs</div>
<div class="t" style="left:807px;width:80px;text-align:center;top:195.92px;font-size:8.6px;font-weight:bold;color:#505050">Kaufpreis</div>
<div class="t " style="left:895px;top:195.92px;font-size:8.6px;font-weight:bold;color:#505050">K</div>
<div class="a" style="left:494px;top:214px;width:2px;height:2px;background:#000"></div>
<div class="t " style="left:503.5px;top:246.65px;font-size:8.2px;color:#1e1e1e">BASF11</div>
<div class="t " style="left:560.7px;top:246.65px;font-size:8.2px;color:#1e1e1e">DE000BASF111</div>
<div class="t " style="left:647px;top:246.65px;font-size:8.2px;color:#1e1e1e">EUR</div>
<div class="t" style="left:680.3px;width:80px;text-align:right;top:246.65px;font-size:8.2px;color:#1e1e1e;">83.28</div>
<div class="t" style="left:729.5px;width:80px;text-align:right;top:246.65px;font-size:8.2px;color:#1e1e1e;">1.0000</div>
<div class="t" style="left:796.3px;width:80px;text-align:right;top:246.65px;font-size:8.2px;color:#1e1e1e;">14,574.16</div>
<div class="t " style="left:425px;top:259.35px;font-size:8.2px;color:#1e1e1e">Ges. AG</div>
<div class="t " style="left:503.5px;top:259.35px;font-size:8.2px;color:#1e1e1e">843002</div>
<div class="t " style="left:560.7px;top:259.35px;font-size:8.2px;color:#1e1e1e">DE0008430026</div>
<div class="t " style="left:647px;top:259.35px;font-size:8.2px;color:#1e1e1e">EUR</div>
<div class="t" style="left:680.3px;width:80px;text-align:right;top:259.35px;font-size:8.2px;color:#1e1e1e;">166.40</div>
<div class="t" style="left:729.5px;width:80px;text-align:right;top:259.35px;font-size:8.2px;color:#1e1e1e;">1.0000</div>
<div class="t" style="left:796.3px;width:80px;text-align:right;top:259.35px;font-size:8.2px;color:#1e1e1e;">14,976.00</div>
<div class="t " style="left:503.5px;top:271.95px;font-size:8.2px;color:#1e1e1e">A0Q4DC</div>
<div class="t " style="left:560.7px;top:271.95px;font-size:8.2px;color:#1e1e1e">CH0038863350</div>
<div class="t " style="left:647px;top:271.95px;font-size:8.2px;color:#1e1e1e">CHF</div>
<div class="t" style="left:680.3px;width:80px;text-align:right;top:271.95px;font-size:8.2px;color:#1e1e1e;">68.01</div>
<div class="t" style="left:729.5px;width:80px;text-align:right;top:271.95px;font-size:8.2px;color:#1e1e1e;">1.2251</div>
<div class="t" style="left:796.3px;width:80px;text-align:right;top:271.95px;font-size:8.2px;color:#1e1e1e;">15,268.00</div>
<div class="t " style="left:503.5px;top:284.55px;font-size:8.2px;color:#1e1e1e">851311</div>
<div class="t " style="left:560.7px;top:284.55px;font-size:8.2px;color:#1e1e1e">CH0012032113</div>
<div class="t " style="left:647px;top:284.55px;font-size:8.2px;color:#1e1e1e">CHF</div>
<div class="t" style="left:680.3px;width:80px;text-align:right;top:284.55px;font-size:8.2px;color:#1e1e1e;">258.18</div>
<div class="t" style="left:729.5px;width:80px;text-align:right;top:284.55px;font-size:8.2px;color:#1e1e1e;">1.2251</div>
<div class="t" style="left:796.3px;width:80px;text-align:right;top:284.55px;font-size:8.2px;color:#1e1e1e;">14,752.50</div>
<div class="t " style="left:425px;top:324.65px;font-size:8.2px;color:#1e1e1e">MTN.Opf 1624</div>
<div class="t " style="left:503.5px;top:324.65px;font-size:8.2px;color:#1e1e1e">DXA1NH</div>
<div class="t " style="left:560.7px;top:324.65px;font-size:8.2px;color:#1e1e1e">DE000DXA1NH2</div>
<div class="t " style="left:647px;top:324.65px;font-size:8.2px;color:#1e1e1e">EUR</div>
<div class="t" style="left:680.3px;width:80px;text-align:right;top:324.65px;font-size:8.2px;color:#1e1e1e;">105.74</div>
<div class="t" style="left:729.5px;width:80px;text-align:right;top:324.65px;font-size:8.2px;color:#1e1e1e;">1.0000</div>
<div class="t" style="left:796.3px;width:80px;text-align:right;top:324.65px;font-size:8.2px;color:#1e1e1e;">82,479.54</div>
<div class="t " style="left:425px;top:337.15px;font-size:8.2px;color:#1e1e1e">.ls.129</div>
<div class="t " style="left:503.5px;top:337.15px;font-size:8.2px;color:#1e1e1e">BRL829</div>
<div class="t " style="left:560.7px;top:337.15px;font-size:8.2px;color:#1e1e1e">DE000BRL8297</div>
<div class="t " style="left:647px;top:337.15px;font-size:8.2px;color:#1e1e1e">EUR</div>
<div class="t" style="left:680.3px;width:80px;text-align:right;top:337.15px;font-size:8.2px;color:#1e1e1e;">105.80</div>
<div class="t" style="left:729.5px;width:80px;text-align:right;top:337.15px;font-size:8.2px;color:#1e1e1e;">1.0000</div>
<div class="t" style="left:796.3px;width:80px;text-align:right;top:337.15px;font-size:8.2px;color:#1e1e1e;">31,740.00</div>
<div class="t " style="left:425px;top:349.35px;font-size:8.2px;color:#1e1e1e">.ls.97</div>
<div class="t " style="left:503.5px;top:349.35px;font-size:8.2px;color:#1e1e1e">BRL797</div>
<div class="t " style="left:560.7px;top:349.35px;font-size:8.2px;color:#1e1e1e">DE000BRL7976</div>
<div class="t " style="left:647px;top:349.35px;font-size:8.2px;color:#1e1e1e">EUR</div>
<div class="t" style="left:680.3px;width:80px;text-align:right;top:349.35px;font-size:8.2px;color:#1e1e1e;">105.20</div>
<div class="t" style="left:729.5px;width:80px;text-align:right;top:349.35px;font-size:8.2px;color:#1e1e1e;">1.0000</div>
<div class="t" style="left:796.3px;width:80px;text-align:right;top:349.35px;font-size:8.2px;color:#1e1e1e;">52,600.00</div>
<div class="t " style="left:425px;top:389.35px;font-size:8.2px;color:#1e1e1e">e 12</div>
<div class="t " style="left:560.7px;top:389.35px;font-size:8.2px;color:#1e1e1e">[0009900012]</div>
<div class="t " style="left:647px;top:389.35px;font-size:8.2px;color:#1e1e1e">EUR</div>
<div class="t" style="left:680.3px;width:80px;text-align:right;top:389.35px;font-size:8.2px;color:#1e1e1e;">0</div>
<div class="t" style="left:729.5px;width:80px;text-align:right;top:389.35px;font-size:8.2px;color:#1e1e1e;">1.0000</div>
<div class="t" style="left:796.3px;width:80px;text-align:right;top:389.35px;font-size:8.2px;color:#1e1e1e;">0</div>
<div class="t" style="left:796.3px;width:80px;text-align:right;top:298.85px;font-size:8.2px;color:#1e1e1e;font-weight:bold;">59,570.66</div>
<div class="t" style="left:796.3px;width:80px;text-align:right;top:364.25px;font-size:8.2px;color:#1e1e1e;font-weight:bold;">166,819.54</div>
<div class="t" style="left:796.3px;width:80px;text-align:right;top:403.95px;font-size:8.2px;color:#1e1e1e;font-weight:bold;">0</div>
<div class="t" style="left:796.3px;width:80px;text-align:right;top:419.15px;font-size:8.2px;color:#1e1e1e;font-weight:bold;">226,390.20</div>
<div class="a" style="left:820px;top:293px;width:57px;height:1px;background:#333"></div>
<div class="a" style="left:820px;top:358px;width:57px;height:1px;background:#333"></div>
<div class="a" style="left:820px;top:398px;width:57px;height:1px;background:#333"></div>
<div class="a" style="left:820px;top:414px;width:57px;height:1px;background:#333"></div>
<div class="a" style="left:440px;top:178px;width:2px;height:13px;background:#bdbdbd"></div>
<div class="a" style="left:462px;top:178px;width:2px;height:13px;background:#bdbdbd"></div>
<div class="a" style="left:502px;top:178px;width:2px;height:13px;background:#bdbdbd"></div>
<div class="a" style="left:560px;top:178px;width:2px;height:13px;background:#bdbdbd"></div>
<div class="a" style="left:618px;top:178px;width:2px;height:13px;background:#bdbdbd"></div>
<div class="a" style="left:713px;top:178px;width:2px;height:13px;background:#bdbdbd"></div>
<svg class="a" style="left:426px;top:178px;" width="10" height="13" viewBox="0 0 10 13"><path d="M1 3v9.5 M4 3v9.5 M8 3v9.5" stroke="#5478a8" stroke-width="2"/><path d="M0.5 2h5l-2.5 3z" fill="#f07a20"/></svg>
<svg class="a" style="left:445px;top:178px;" width="13" height="13" viewBox="0 0 13 13"><path d="M1.5 2v10.5 M4.5 2v10.5 M8.5 2v10.5 M11.5 2v10.5" stroke="#5478a8" stroke-width="1.6"/><path d="M6.5 3v10" stroke="#999" stroke-dasharray="1 1"/><path d="M3 0.2h7l-3.5 3z" fill="#3cc030"/></svg>
<svg class="a" style="left:467px;top:178px;" width="12" height="13" viewBox="0 0 12 13"><text x="0" y="6" font-size="6" font-family="Liberation Sans" fill="#c4c4c4">A</text><text x="0" y="12.5" font-size="6" font-family="Liberation Sans" fill="#c4c4c4">Z</text><path d="M8.5 1v11 M6 9.5l2.5 3 2.5-3" stroke="#bcbcbc" fill="none"/></svg>
<svg class="a" style="left:486px;top:178px;" width="12" height="13" viewBox="0 0 12 13"><text x="0" y="6" font-size="6" font-family="Liberation Sans" fill="#c4c4c4">Z</text><text x="0" y="12.5" font-size="6" font-family="Liberation Sans" fill="#c4c4c4">A</text><path d="M8.5 1v11 M6 9.5l2.5 3 2.5-3" stroke="#bcbcbc" fill="none"/></svg>
<svg class="a" style="left:509px;top:179px;" width="10" height="11" viewBox="0 0 10 11"><path d="M0 1h10 M0 3.5h10 M0 6h10 M0 8.5h10 M0 10.5h10" stroke="#c0c0c0" stroke-width="1"/></svg>
<svg class="a" style="left:527px;top:179px;" width="9" height="11" viewBox="0 0 9 11"><path d="M0 1h9 M1.5 3.5h6 M0 6h9 M1.5 8.5h6 M0 10.5h9" stroke="#c0c0c0" stroke-width="1"/></svg>
<svg class="a" style="left:545px;top:179px;" width="10" height="11" viewBox="0 0 10 11"><path d="M0 1h10 M0 3.5h10 M0 6h10 M0 8.5h10 M0 10.5h10" stroke="#c0c0c0" stroke-width="1"/></svg>
<svg class="a" style="left:566px;top:179px;" width="10" height="12" viewBox="0 0 10 12"><text x="0" y="10" font-size="11" font-family="Liberation Sans" fill="#c8c8c8">%</text></svg>
<svg class="a" style="left:583px;top:179px;" width="12" height="12" viewBox="0 0 12 12"><text x="0" y="5.5" font-size="6" font-family="Liberation Sans" fill="#c4c4c4">0.0</text><text x="0" y="11.5" font-size="6" font-family="Liberation Sans" fill="#c4c4c4">.00</text></svg>
<svg class="a" style="left:601px;top:179px;" width="12" height="12" viewBox="0 0 12 12"><text x="0" y="5.5" font-size="6" font-family="Liberation Sans" fill="#c4c4c4">.0</text><text x="0" y="11.5" font-size="6" font-family="Liberation Sans" fill="#c4c4c4">.00</text></svg>
<svg class="a" style="left:623px;top:178px;" width="12" height="13" viewBox="0 0 12 13"><rect x="1" y="0.5" width="4" height="5" rx="2" fill="none" stroke="#c0c0c0"/><path d="M3 6v7 M7 2v11 M10.5 2v11" stroke="#c0c0c0" stroke-width="1.3"/></svg>
<svg class="a" style="left:643px;top:179px;" width="9" height="11" viewBox="0 0 9 11"><path d="M8 1H1l4 4.5L1 10h7" fill="none" stroke="#c4c4c4" stroke-width="1.1"/></svg>
<svg class="a" style="left:660px;top:179px;" width="11" height="11" viewBox="0 0 11 11"><text x="0" y="10.5" font-size="12" font-weight="bold" font-family="Liberation Serif" fill="#c8c8c8">A</text></svg>
<svg class="a" style="left:677px;top:178px;" width="12" height="13" viewBox="0 0 12 13"><path d="M1 1h9v3 M3 4v9 M7 4v9 M10.5 4v9" stroke="#c4c4c4" stroke-width="1.3" fill="none"/></svg>
<div class="a" style="left:695px;top:178px;width:14px;height:14px;background:#dde8f4;border:1px solid #6a8cc0"></div>
<svg class="a" style="left:697px;top:180px;" width="10" height="10" viewBox="0 0 10 10"><rect x="0.5" y="4" width="2.3" height="6" fill="#d83030"/><rect x="3.8" y="1" width="2.3" height="9" fill="#3060c8"/><rect x="7" y="3" width="2.3" height="7" fill="#80c040"/></svg>
<div class="a" style="left:720px;top:180px;width:8px;height:8px;background:#d0d0d0"></div>
<div class="a" style="left:193px;top:23px;width:233px;height:533px;background:#fff;border:1px solid #d6d6d6;box-shadow:2px 2px 3px rgba(0,0,0,.28)"></div>
<div class="a" style="left:194px;top:24px;width:231px;height:19px;background:#ececec"></div>
<div class="t " style="left:199.3px;top:29.17px;font-size:9.6px;font-weight:bold;color:#5a5a5a;letter-spacing:-0.3px">Schnellzugriffsleiste anpassen</div>
<div class="t" style="left:220px;top:48.00px;font-size:10px;letter-spacing:-0.3px;color:#1e1e1e">Explorer</div>
<div class="t" style="left:220px;top:66.79px;font-size:10px;letter-spacing:-0.3px;color:#1e1e1e">Speichern</div>
<div class="a" style="left:200.8px;top:67.39px;width:8px;height:4.5px;border-left:1.3px solid #858585;border-bottom:1.3px solid #858585;transform:rotate(-45deg)"></div>
<div class="t" style="left:220px;top:85.58px;font-size:10px;letter-spacing:-0.3px;color:#1e1e1e">Speichern unter</div>
<div class="a" style="left:195px;top:99.67px;width:229px;height:18.3px;background:#f5cfae"></div>
<div class="t" style="left:220px;top:104.37px;font-size:10px;letter-spacing:-0.3px;color:#1e1e1e">Drucken</div>
<div class="t" style="left:220px;top:123.16px;font-size:10px;letter-spacing:-0.3px;color:#1e1e1e">Vorangehendes Fenster</div>
<div class="t" style="left:220px;top:141.95px;font-size:10px;letter-spacing:-0.3px;color:#1e1e1e">Nächstes Fenster</div>
<div class="t" style="left:220px;top:160.74px;font-size:10px;letter-spacing:-0.3px;color:#1e1e1e">Neu auswerten</div>
<div class="a" style="left:200.8px;top:161.34px;width:8px;height:4.5px;border-left:1.3px solid #858585;border-bottom:1.3px solid #858585;transform:rotate(-45deg)"></div>
<div class="t" style="left:220px;top:179.53px;font-size:10px;letter-spacing:-0.3px;color:#1e1e1e">Intradaydaten</div>
<div class="a" style="left:200.8px;top:180.13px;width:8px;height:4.5px;border-left:1.3px solid #858585;border-bottom:1.3px solid #858585;transform:rotate(-45deg)"></div>
<div class="t" style="left:220px;top:198.32px;font-size:10px;letter-spacing:-0.3px;color:#1e1e1e">Transaktionen erfassen</div>
<div class="a" style="left:200.8px;top:198.92px;width:8px;height:4.5px;border-left:1.3px solid #858585;border-bottom:1.3px solid #858585;transform:rotate(-45deg)"></div>
<div class="t" style="left:220px;top:217.11px;font-size:10px;letter-spacing:-0.3px;color:#1e1e1e">Sammeltransaktionen erfassen</div>
<div class="a" style="left:200.8px;top:217.71px;width:8px;height:4.5px;border-left:1.3px solid #858585;border-bottom:1.3px solid #858585;transform:rotate(-45deg)"></div>
<div class="t" style="left:220px;top:235.90px;font-size:10px;letter-spacing:-0.3px;color:#1e1e1e">Offene Termingeschäfte überprüfen</div>
<div class="t" style="left:220px;top:254.69px;font-size:10px;letter-spacing:-0.3px;color:#1e1e1e">Orderbuch</div>
<div class="a" style="left:200.8px;top:255.29px;width:8px;height:4.5px;border-left:1.3px solid #858585;border-bottom:1.3px solid #858585;transform:rotate(-45deg)"></div>
<div class="t" style="left:220px;top:273.48px;font-size:10px;letter-spacing:-0.3px;color:#1e1e1e">Portfolio-Rebalancing</div>
<div class="a" style="left:200.8px;top:274.08px;width:8px;height:4.5px;border-left:1.3px solid #858585;border-bottom:1.3px solid #858585;transform:rotate(-45deg)"></div>
<div class="t" style="left:220px;top:292.27px;font-size:10px;letter-spacing:-0.3px;color:#1e1e1e">Investment-Agenten konfigurieren</div>
<div class="t" style="left:220px;top:311.06px;font-size:10px;letter-spacing:-0.3px;color:#1e1e1e">Taschenrechner</div>
<div class="t" style="left:220px;top:329.85px;font-size:10px;letter-spacing:-0.3px;color:#1e1e1e">Options- und OS-Rechner</div>
<div class="t" style="left:220px;top:348.64px;font-size:10px;letter-spacing:-0.3px;color:#1e1e1e">Fonds-Rechner</div>
<div class="t" style="left:220px;top:367.43px;font-size:10px;letter-spacing:-0.3px;color:#1e1e1e">Anleihe-Rechner</div>
<div class="t" style="left:220px;top:386.22px;font-size:10px;letter-spacing:-0.3px;color:#1e1e1e">Anleihe-Szenarioanalyse</div>
<div class="t" style="left:220px;top:405.01px;font-size:10px;letter-spacing:-0.3px;color:#1e1e1e">Money-Management</div>
<div class="t" style="left:220px;top:423.80px;font-size:10px;letter-spacing:-0.3px;color:#1e1e1e">Daten aktualisieren</div>
<div class="t" style="left:220px;top:442.59px;font-size:10px;letter-spacing:-0.3px;color:#1e1e1e">Optionsstrategie-Rechner</div>
<div class="t" style="left:220px;top:461.38px;font-size:10px;letter-spacing:-0.3px;color:#1e1e1e">PSI Transaction Data</div>
<div class="t" style="left:220px;top:480.17px;font-size:10px;letter-spacing:-0.3px;color:#1e1e1e">Papierkorb öffnen</div>
<div class="t" style="left:220px;top:498.96px;font-size:10px;letter-spacing:-0.3px;color:#1e1e1e">DE</div>
<div class="a" style="left:200.8px;top:499.56px;width:8px;height:4.5px;border-left:1.3px solid #858585;border-bottom:1.3px solid #858585;transform:rotate(-45deg)"></div>
<div class="a" style="left:220px;top:513.5px;width:205px;height:1px;background:#e3e3e3"></div>
<div class="t" style="left:220px;top:519.70px;font-size:10px;letter-spacing:-0.3px;color:#1e1e1e">Schnellzugriffsleiste <u>u</u>nter Ribbon anzeigen</div>
<div class="a" style="left:220px;top:534.3px;width:205px;height:1px;background:#e3e3e3"></div>
<div class="t" style="left:220px;top:540.40px;font-size:10px;letter-spacing:-0.3px;color:#1e1e1e">Menüband m<u>i</u>nimieren</div>
<svg class="a" style="left:376px;top:101px;z-index:6" width="12" height="17" viewBox="0 0 12 17"><path d="M1.2 1.2 L1.2 14 L4.3 11 L6.6 15.6 L8.6 14.7 L6.4 10.2 L10.6 10 Z" fill="#fff" stroke="#1a1a1a" stroke-width="0.95" stroke-linejoin="round"/></svg>
</body></html>
